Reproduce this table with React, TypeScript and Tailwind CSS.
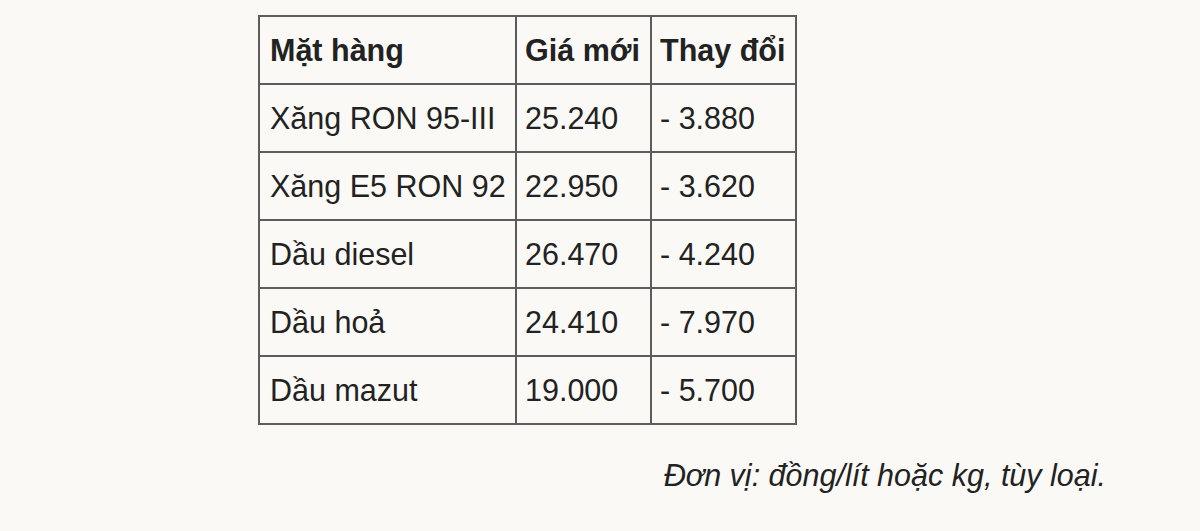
import React from "react";

const rows = [
  ["Xăng RON 95-III", "25.240", "- 3.880"],
  ["Xăng E5 RON 92", "22.950", "- 3.620"],
  ["Dầu diesel", "26.470", "- 4.240"],
  ["Dầu hoả", "24.410", "- 7.970"],
  ["Dầu mazut", "19.000", "- 5.700"],
];

export default function App() {
  return (
    <div
      className="w-[1200px] h-[531px] bg-[#faf9f5] text-[#222222] overflow-hidden"
      style={{ fontFamily: '"Liberation Sans", Arial, sans-serif' }}
    >
      <div className="pt-[15px] pl-[258px]">
        <table className="border-collapse table-fixed w-[537px] text-[30.5px] leading-none">
          <colgroup>
            <col className="w-[257px]" />
            <col className="w-[135px]" />
            <col className="w-[145px]" />
          </colgroup>
          <thead>
            <tr className="h-[68px]">
              <th className="border-2 border-[#5c5c5c] text-left font-bold pl-[10px] pr-0 align-middle whitespace-nowrap">Mặt hàng</th>
              <th className="border-2 border-[#5c5c5c] text-left font-bold pl-[8px] pr-0 align-middle whitespace-nowrap">Giá mới</th>
              <th className="border-2 border-[#5c5c5c] text-left font-bold pl-[8px] pr-0 align-middle whitespace-nowrap">Thay đổi</th>
            </tr>
          </thead>
          <tbody>
            {rows.map((r) => (
              <tr key={r[0]} className="h-[68px]">
                <td className="border-2 border-[#5c5c5c] pl-[10px] align-middle whitespace-nowrap">{r[0]}</td>
                <td className="border-2 border-[#5c5c5c] pl-[8px] align-middle">{r[1]}</td>
                <td className="border-2 border-[#5c5c5c] pl-[8px] align-middle">{r[2]}</td>
              </tr>
            ))}
          </tbody>
        </table>
      </div>
      <div className="flex justify-end pr-[94px] pt-[35px]">
        <p className="italic text-[30.5px] leading-none">Đơn vị: đồng/lít hoặc kg, tùy loại.</p>
      </div>
    </div>
  );
}
